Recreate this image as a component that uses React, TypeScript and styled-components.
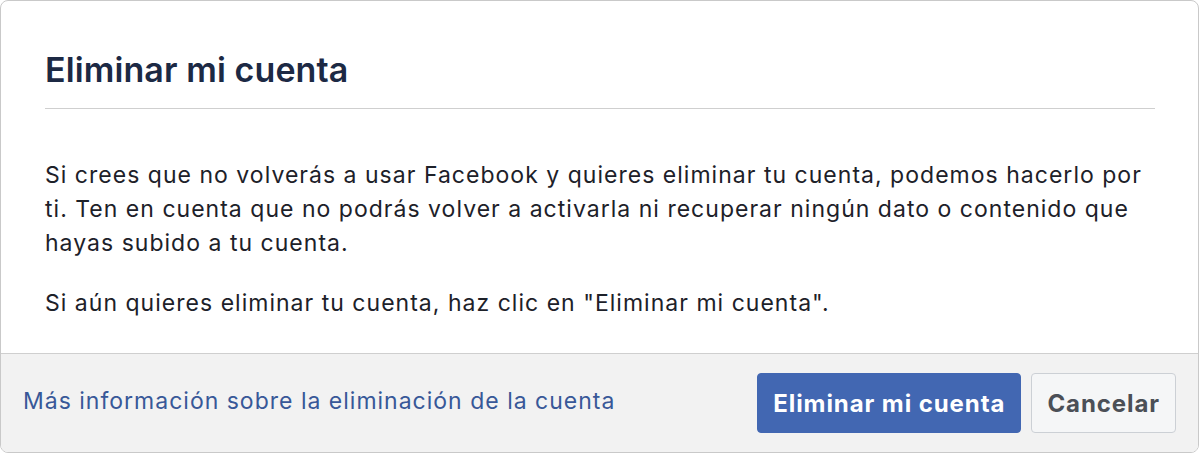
import React from 'react';
import styled, { createGlobalStyle } from 'styled-components';

const GlobalStyle = createGlobalStyle`
  html, body {
    margin: 0;
    padding: 0;
    background: #fff;
  }
  body {
    font-family: Inter, "Liberation Sans", Arial, sans-serif;
    -webkit-font-smoothing: antialiased;
  }
`;

const Dialog = styled.div`
  box-sizing: border-box;
  width: 1199px;
  height: 453px;
  border: 1px solid #c9c9c9;
  border-radius: 8px;
  overflow: hidden;
  display: flex;
  flex-direction: column;
  background: #fff;
`;

const Header = styled.div`
  margin: 0 43px 0 44px;
  padding: 49px 0 18px;
  border-bottom: 1px solid #cfcfcf;
`;

const Title = styled.h2`
  margin: 0;
  font-size: 34px;
  line-height: 40px;
  font-weight: 600;
  color: #1c2944;
  letter-spacing: 0.1px;
`;

const Body = styled.div`
  flex: 1;
  padding: 49px 44px 0 44px;
`;

const Paragraph = styled.p`
  margin: 0 0 26px 0;
  font-size: 23px;
  line-height: 34px;
  letter-spacing: 1.02px;
  color: #1d2129;
`;

const Footer = styled.div`
  height: 98px;
  border-top: 1px solid #cfcfcf;
  background: #f2f2f2;
  display: flex;
  align-items: center;
  justify-content: space-between;
  padding: 0 22px;
`;

const Link = styled.a`
  font-size: 23px;
  letter-spacing: 1px;
  padding-bottom: 4px;
  color: #385898;
  text-decoration: none;
  cursor: pointer;
`;

const Actions = styled.div`
  display: flex;
  gap: 10px;
`;

const Button = styled.button<{ primary?: boolean }>`
  box-sizing: border-box;
  height: 60px;
  padding: 0 15px;
  border-radius: 4px;
  font-family: inherit;
  font-size: 24px;
  font-weight: 700;
  letter-spacing: 0.92px;
  cursor: pointer;
  border: 1px solid ${p => (p.primary ? '#4267b2' : '#ccd0d5')};
  background: ${p => (p.primary ? '#4267b2' : '#f5f6f7')};
  color: ${p => (p.primary ? '#fff' : '#4b4f56')};
`;

export default function App() {
  return (
    <>
      <GlobalStyle />
      <Dialog>
        <Header>
          <Title>Eliminar mi cuenta</Title>
        </Header>
        <Body>
          <Paragraph>
            Si crees que no volverás a usar Facebook y quieres eliminar tu cuenta, podemos hacerlo por
            ti. Ten en cuenta que no podrás volver a activarla ni recuperar ningún dato o contenido que
            hayas subido a tu cuenta.
          </Paragraph>
          <Paragraph>Si aún quieres eliminar tu cuenta, haz clic en "Eliminar mi cuenta".</Paragraph>
        </Body>
        <Footer>
          <Link>Más información sobre la eliminación de la cuenta</Link>
          <Actions>
            <Button primary>Eliminar mi cuenta</Button>
            <Button>Cancelar</Button>
          </Actions>
        </Footer>
      </Dialog>
    </>
  );
}
